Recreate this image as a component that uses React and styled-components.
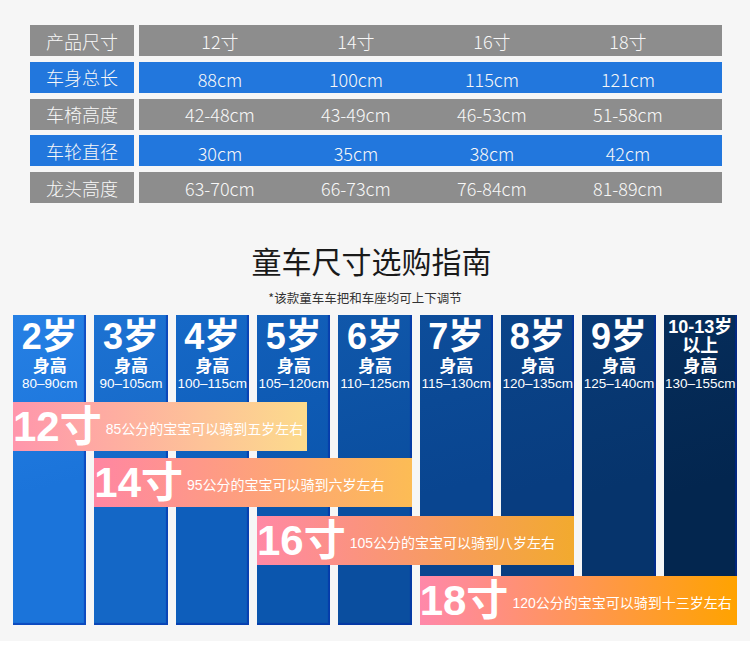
import styled, { createGlobalStyle } from "styled-components";

const GlobalStyle = createGlobalStyle`
  body {
    margin: 0;
    background: #ffffff;
    font-family: "Noto Sans CJK SC", sans-serif;
  }
`;

const specRows = [
  { label: "产品尺寸", values: ["12寸", "14寸", "16寸", "18寸"] },
  { label: "车身总长", values: ["88cm", "100cm", "115cm", "121cm"], blue: true },
  { label: "车椅高度", values: ["42-48cm", "43-49cm", "46-53cm", "51-58cm"] },
  { label: "车轮直径", values: ["30cm", "35cm", "38cm", "42cm"], blue: true },
  { label: "龙头高度", values: ["63-70cm", "66-73cm", "76-84cm", "81-89cm"] },
];

const ages = [
  { age: "2岁", range: "80–90cm", color: "#1b74da", light: "#2680e4" },
  { age: "3岁", range: "90–105cm", color: "#1467c6", light: "#1d72d2" },
  { age: "4岁", range: "100–115cm", color: "#0e5ebb", light: "#1668c6" },
  { age: "5岁", range: "105–120cm", color: "#0b56ae", light: "#125fb9" },
  { age: "6岁", range: "110–125cm", color: "#0a4e9f", light: "#1057aa" },
  { age: "7岁", range: "115–130cm", color: "#094590", light: "#0d4d9a" },
  { age: "8岁", range: "120–135cm", color: "#083d80", light: "#0b4489" },
  { age: "9岁", range: "125–140cm", color: "#06346c", light: "#093a76" },
  { age: ["10-13岁", "以上"], range: "130–155cm", color: "#03264f", light: "#062d5b" },
];

const bikes = [
  { size: "12寸", note: "85公分的宝宝可以骑到五岁左右", start: 1, end: 5, trim: 23, left: "#ff96ac", right: "#fcdb8c" },
  { size: "14寸", note: "95公分的宝宝可以骑到六岁左右", start: 2, end: 6, trim: 0, left: "#ff86a2", right: "#fcbc55" },
  { size: "16寸", note: "105公分的宝宝可以骑到八岁左右", start: 4, end: 8, trim: 0, left: "#ff88a5", right: "#f2aa2e" },
  { size: "18寸", note: "120公分的宝宝可以骑到十三岁左右", start: 6, end: 10, trim: 0, left: "#ff88aa", right: "#ffa300" },
];

const Page = styled.div`
  width: 750px;
  height: 641px;
  box-sizing: border-box;
  padding-top: 25px;
  background: #f6f6f6;
`;

const SpecTable = styled.div`
  width: 692px;
  margin-left: 30px;
  display: grid;
  row-gap: 5.75px;
`;

const SpecRow = styled.div`
  display: grid;
  grid-template-columns: 104px 1fr;
  column-gap: 5px;
  height: 31px;
`;

const SpecCell = styled.div`
  background: ${(props) => (props.$blue ? "#2277dd" : "#8d8d8d")};
  color: #f8f8f8;
  font-family: "Noto Sans CJK SC", sans-serif;
  font-weight: 300;
  font-size: 18px;
  display: flex;
  align-items: center;
  justify-content: center;
`;

const ValueCell = styled(SpecCell)`
  display: grid;
  grid-template-columns: repeat(4, 136px);
  padding-left: 13px;
  justify-content: start;
  span {
    text-align: center;
    padding-top: ${(props) => (props.$blue ? "4px" : "0")};
  }
`;

const Title = styled.h2`
  margin: 39px 0 0;
  padding-right: 7px;
  text-align: center;
  font-size: 30px;
  line-height: 36px;
  font-weight: 400;
  color: #1a1a1a;
`;

const Note = styled.p`
  margin: 12px 0 0;
  padding-right: 20px;
  text-align: center;
  font-size: 12.5px;
  line-height: 16px;
  color: #333333;
`;

const Chart = styled.div`
  width: 724px;
  margin: 9px 0 0 13px;
  display: grid;
  grid-template-columns: repeat(9, 1fr);
  grid-template-rows: 87px 56px 58px 60px 49px;
  column-gap: 8px;
`;

const AgeColumn = styled.div`
  grid-row: 1 / -1;
  grid-column: ${(props) => props.$index + 1};
  padding-top: 1px;
  display: flex;
  flex-direction: column;
  align-items: center;
  color: #ffffff;
  background: linear-gradient(165deg, ${(props) => props.$light} 0%, ${(props) => props.$color} 55%);
  box-shadow: inset -2px -2px 1px rgba(0, 40, 170, 0.55);
  font-family: "Liberation Sans", "Noto Sans CJK SC", sans-serif;
`;

const Age = styled.div`
  height: 42px;
  display: flex;
  flex-direction: column;
  justify-content: center;
  align-items: center;
  font-weight: 700;
  font-size: ${(props) => (props.$small ? "18px" : "36px")};
  line-height: ${(props) => (props.$small ? "19px" : "40px")};
  white-space: nowrap;
`;

const HeightLabel = styled.div`
  font-size: 17px;
  line-height: 18px;
  font-weight: 700;
`;

const Range = styled.div`
  font-size: 13.5px;
  line-height: 16px;
  white-space: nowrap;
`;

const SizeBar = styled.div`
  grid-column: ${(props) => props.$start} / ${(props) => props.$end};
  grid-row: ${(props) => props.$row};
  align-self: start;
  justify-self: start;
  z-index: 1;
  width: calc(100% - ${(props) => props.$trim}px);
  height: 49px;
  display: flex;
  align-items: center;
  gap: 4px;
  color: #ffffff;
  background: linear-gradient(90deg, ${(props) => props.$left}, ${(props) => props.$right});
  font-family: "Liberation Sans", "Noto Sans CJK SC", sans-serif;
  white-space: nowrap;
`;

const SizeName = styled.span`
  font-size: 42px;
  line-height: 49px;
  font-weight: 700;
`;

const SizeNote = styled.span`
  font-size: 14px;
  padding-top: 2px;
`;

function App() {
  return (
    <>
      <GlobalStyle />
      <Page>
        <SpecTable>
          {specRows.map((row) => (
            <SpecRow key={row.label}>
              <SpecCell $blue={row.blue}>{row.label}</SpecCell>
              <ValueCell $blue={row.blue}>
                {row.values.map((value) => (
                  <span key={value}>{value}</span>
                ))}
              </ValueCell>
            </SpecRow>
          ))}
        </SpecTable>

        <Title>童车尺寸选购指南</Title>
        <Note>*该款童车车把和车座均可上下调节</Note>

        <Chart>
          {ages.map((item, i) => (
            <AgeColumn key={i} $index={i} $color={item.color} $light={item.light}>
              {Array.isArray(item.age) ? (
                <Age $small>
                  <span>{item.age[0]}</span>
                  <span>{item.age[1]}</span>
                </Age>
              ) : (
                <Age>{item.age}</Age>
              )}
              <HeightLabel>身高</HeightLabel>
              <Range>{item.range}</Range>
            </AgeColumn>
          ))}
          {bikes.map((bike, i) => (
            <SizeBar
              key={bike.size}
              $row={i + 2}
              $start={bike.start}
              $end={bike.end}
              $trim={bike.trim}
              $left={bike.left}
              $right={bike.right}
            >
              <SizeName>{bike.size}</SizeName>
              <SizeNote>{bike.note}</SizeNote>
            </SizeBar>
          ))}
        </Chart>
      </Page>
    </>
  );
}

export default App;
